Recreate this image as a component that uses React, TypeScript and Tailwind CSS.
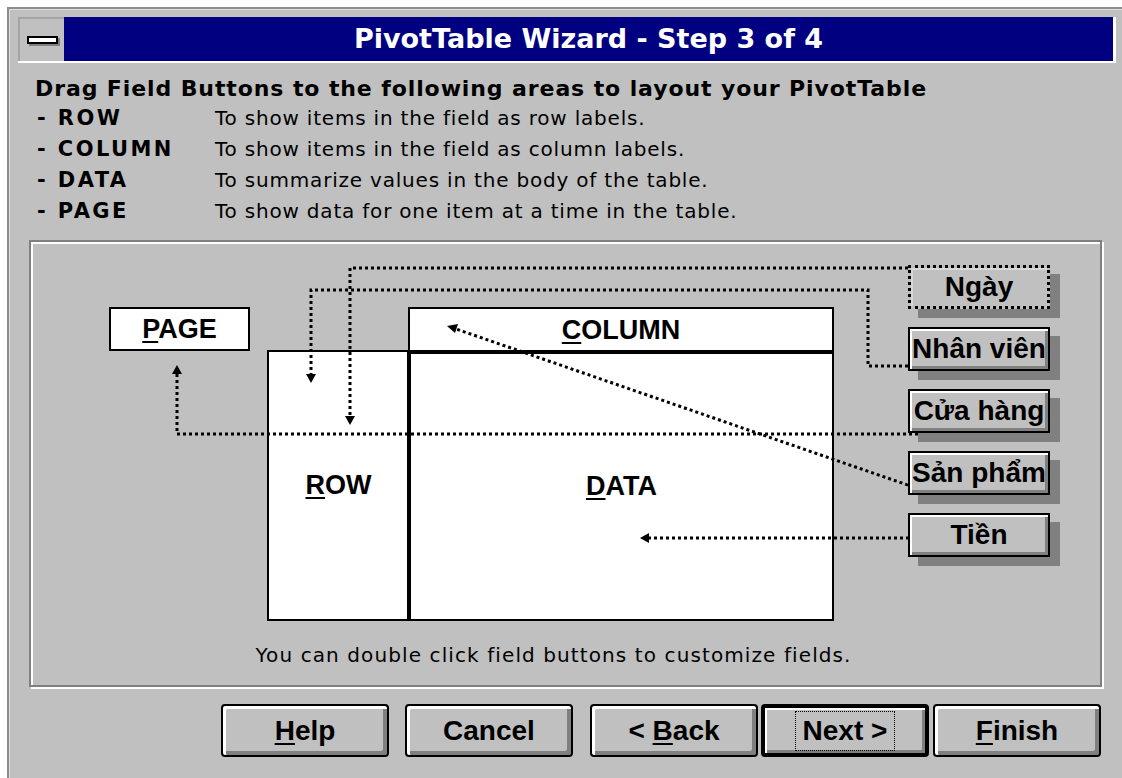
import React from 'react';

const dv = "font-['DejaVu_Sans',sans-serif]";
const lib = "font-['Liberation_Sans',Arial,sans-serif]";

function U({ children }: { children: React.ReactNode }) {
  return <span className="underline decoration-2 underline-offset-[3px]">{children}</span>;
}

const rows = [
  ['- ROW', 'To show items in the field as row labels.'],
  ['- COLUMN', 'To show items in the field as column labels.'],
  ['- DATA', 'To summarize values in the body of the table.'],
  ['- PAGE', 'To show data for one item at a time in the table.'],
];

const fields = ['Ngày', 'Nhân viên', 'Cửa hàng', 'Sản phẩm', 'Tiền'];

function FieldButton({ label, focused }: { label: string; focused?: boolean }) {
  return (
    <div
      className={`flex h-[44px] w-[142px] items-center justify-center bg-[#c0c0c0] text-[28px] leading-none font-bold text-black ${lib} ${
        focused
          ? 'border-[3px] border-dotted border-black shadow-[inset_2px_2px_0_#d8d8d8,10px_9px_0_#808080]'
          : 'border-2 border-black shadow-[inset_2px_2px_0_#fff,inset_-3px_-3px_0_#808080,10px_9px_0_#808080]'
      }`}
    >
      {label}
    </div>
  );
}

function Button({ children, isDefault }: { children: React.ReactNode; isDefault?: boolean }) {
  return (
    <div
      className={`flex h-[53px] w-[168px] items-center justify-center rounded-[4px] border-black bg-[#c0c0c0] text-[28px] leading-none font-bold text-black ${lib} ${
        isDefault
          ? 'border-[4px] shadow-[inset_2px_2px_0_#fff,inset_-3px_-3px_0_#808080]'
          : 'border-2 shadow-[inset_3px_3px_0_#fff,inset_-4px_-4px_0_#808080]'
      }`}
    >
      <span>{children}</span>
    </div>
  );
}

function Arrows() {
  const dot = { stroke: '#000', strokeWidth: 3, strokeDasharray: '3 3', fill: 'none' };
  return (
    <svg
      className="pointer-events-none absolute inset-0"
      width={1069}
      height={398}
      viewBox="31 242 1069 398"
    >
      {/* Ngày -> ROW */}
      <path d="M908 268 H350 V416" {...dot} />
      <polygon points="345,416 355,416 350,425" fill="#000" />
      {/* Nhân viên -> ROW */}
      <path d="M908 366 H868 V290 H311 V374" {...dot} />
      <polygon points="306,374 316,374 311,383" fill="#000" />
      {/* Cửa hàng -> PAGE */}
      <path d="M918 434 H177 V374" {...dot} />
      <polygon points="172,374 182,374 177,365" fill="#000" />
      {/* Sản phẩm -> COLUMN */}
      <path d="M925 491 L456 329" {...dot} />
      <polygon points="447,326 458,324 455,333" fill="#000" />
      {/* Tiền -> DATA */}
      <path d="M927 538 H649" {...dot} />
      <polygon points="640,538 649,533 649,543" fill="#000" />
    </svg>
  );
}

export default function App() {
  return (
    <div className="h-[778px] w-[1122px] overflow-hidden bg-white">
      <div className="ml-[7px] mt-[7px] h-[771px] w-[1115px] border-l-2 border-t-2 border-[#8c8c8c] bg-[#c0c0c0] pt-[8px] shadow-[inset_1px_1px_0_#e0e0e0]">
        {/* Title bar */}
        <div className="ml-[9px] mr-[6px] flex h-[46px] border-b-2 border-white">
          <div className="flex w-[46px] items-center justify-center border-l-2 border-t-2 border-[#a4a4a4] bg-[#c0c0c0]">
            <div className="h-[8px] w-[31px] border-2 border-black bg-white shadow-[2px_2px_0_#808080]" />
          </div>
          <div
            className={`flex flex-1 items-center justify-center border-r-[3px] border-white bg-[#000080] text-[27px] font-bold text-white ${dv}`}
          >
            PivotTable Wizard - Step 3 of 4
          </div>
        </div>

        {/* Instructions */}
        <div className={`pl-[26px] text-black ${dv}`}>
          <div className="mt-[14px] h-[24px] text-[22px] leading-[24px] font-bold tracking-[0.9px]">
            Drag Field Buttons to the following areas to layout your PivotTable
          </div>
          <div className="mt-[2px]">
            {rows.map(([k, v]) => (
              <div key={k} className="flex h-[31px] items-center leading-[31px]">
                <div className="w-[180px] pl-[2px] text-[21px] font-bold tracking-[2.4px]">{k}</div>
                <div className="text-[20px] tracking-[0.8px]">{v}</div>
              </div>
            ))}
          </div>
        </div>

        {/* Layout panel */}
        <div className="ml-[20px] mt-[13px] flex h-[447px] w-[1073px] flex-col border-2 border-[#808080] shadow-[inset_2px_2px_0_#fff,2px_2px_0_#fff]">
          <div className="relative h-[398px]">
            <div
              className={`absolute left-[78px] top-[65px] flex h-[44px] w-[141px] items-center justify-center border-2 border-black bg-white text-[27px] font-bold ${lib}`}
            >
              <span>
                <U>P</U>AGE
              </span>
            </div>
            <div
              className={`absolute left-[377px] top-[65px] flex h-[46px] w-[426px] items-center justify-center border-2 border-black bg-white text-[27px] font-bold ${lib}`}
            >
              <span>
                <U>C</U>OLUMN
              </span>
            </div>
            <div
              className={`absolute left-[236px] top-[108px] flex h-[271px] w-[143px] items-center justify-center border-2 border-black bg-white text-[27px] font-bold ${lib}`}
            >
              <span>
                <U>R</U>OW
              </span>
            </div>
            <div
              className={`absolute left-[376px] top-[108px] flex h-[271px] w-[427px] items-center justify-center border-2 border-l-4 border-t-4 border-black bg-white text-[27px] font-bold ${lib}`}
            >
              <span>
                <U>D</U>ATA
              </span>
            </div>

            <Arrows />

            <div className="absolute left-[877px] top-[23px] flex flex-col gap-[18px]">
              {fields.map((f, i) => (
                <FieldButton key={f} label={f} focused={i === 0} />
              ))}
            </div>
          </div>
          <p className={`pr-[24px] text-center text-[20px] leading-[30px] tracking-[1.1px] text-black ${dv}`}>
            You can double click field buttons to customize fields.
          </p>
        </div>

        {/* Buttons */}
        <div className="ml-[212px] mt-[17px] flex">
          <Button>
            <U>H</U>elp
          </Button>
          <div className="ml-[16px]">
            <Button>Cancel</Button>
          </div>
          <div className="ml-[17px]">
            <Button>
              {'< '}
              <U>B</U>ack
            </Button>
          </div>
          <div className="ml-[3px]">
            <Button isDefault>
              <span className="inline-block border border-dotted border-black px-[7px] py-[5px]">Next &gt;</span>
            </Button>
          </div>
          <div className="ml-[4px]">
            <Button>
              <U>F</U>inish
            </Button>
          </div>
        </div>
      </div>
    </div>
  );
}
